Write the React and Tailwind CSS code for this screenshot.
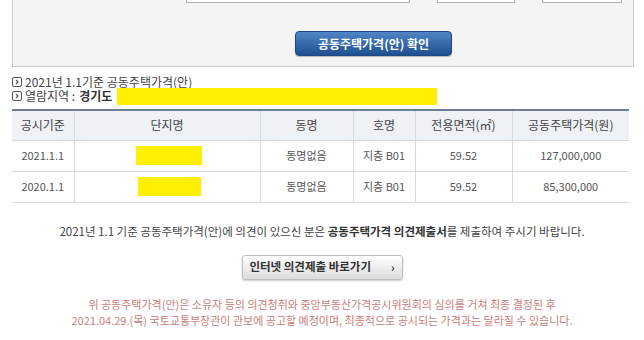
import React from "react";

const rows = [
  { date: "2021.1.1", hl: "ml-[61px] w-[66px]", dong: "동명없음", ho: "지층 B01", area: "59.52", price: "127,000,000" },
  { date: "2020.1.1", hl: "ml-[63px] w-[63px]", dong: "동명없음", ho: "지층 B01", area: "59.52", price: "85,300,000" },
];

function Bullet() {
  return (
    <span className="inline-flex shrink-0 items-center justify-center w-[10px] h-[10px] border border-[#555] rounded-[2px] mr-[3px]">
      <svg width="6" height="6" viewBox="0 0 6 6">
        <path d="M2 1 L4 3 L2 5" fill="none" stroke="#555" strokeWidth="1.2" />
      </svg>
    </span>
  );
}

export default function App() {
  return (
    <div className="w-[644px] h-[340px] bg-white overflow-hidden font-['Noto_Sans_CJK_KR','Noto_Sans',sans-serif] text-[#555]">
      {/* search box */}
      <div className="ml-[12px] w-[622px] h-[67px] bg-[#f4f4f4] border-x border-b border-[#c9c9c9] flex flex-col">
        <div className="flex h-[3px]">
          <div className="ml-[173px] w-[224px] border-x border-b border-[#b5b5b5] bg-white" />
          <div className="ml-[27px] w-[78px] border-x border-b border-[#b5b5b5] bg-white" />
          <div className="ml-[27px] w-[80px] border-x border-b border-[#b5b5b5] bg-white" />
        </div>
        <div className="flex mt-[28px]">
          <button className="ml-[282px] w-[157px] h-[25px] rounded-[4px] bg-gradient-to-b from-[#4f86c6] to-[#1f4f8f] border border-[#1d4a85] text-white text-[12px] font-bold leading-none shadow-[0_1px_1px_rgba(0,0,0,0.25)]">
            공동주택가격(안) 확인
          </button>
        </div>
      </div>

      {/* info lines */}
      <div className="ml-[12px] mt-[8px] text-[12px] leading-[14px] text-[#444]">
        <div className="flex items-center h-[14px]">
          <Bullet />
          <span>2021년 1.1기준 공동주택가격(안)</span>
        </div>
        <div className="flex items-center h-[14px]">
          <Bullet />
          <span>열람지역 :</span>
          <span className="font-bold text-[#333] ml-[4px]">경기도</span>
          <span className="ml-[5px] w-[320px] h-[17px] bg-[#ffef00]" />
        </div>
      </div>

      {/* table */}
      <table className="ml-[12px] mt-[6px] w-[617px] border-collapse table-fixed text-center">
        <colgroup>
          <col className="w-[62px]" />
          <col className="w-[186px]" />
          <col className="w-[93px]" />
          <col className="w-[62px]" />
          <col className="w-[97px]" />
          <col />
        </colgroup>
        <thead>
          <tr className="h-[30px] bg-[#eef1f6] border-t-2 border-[#6d7d95] text-[12px] text-[#444]">
            {["공시기준", "단지명", "동명", "호명", "전용면적(㎡)", "공동주택가격(원)"].map((h, i) => (
              <th key={h} className={`font-normal border-b border-[#d5d9e0] ${i > 0 ? "border-l" : ""} border-l-[#d5d9e0]`}>
                {h}
              </th>
            ))}
          </tr>
        </thead>
        <tbody className="text-[11px] text-[#555]">
          {rows.map((r) => (
            <tr key={r.date} className="h-[31px] border-b border-[#d5d9e0]">
              <td>{r.date}</td>
              <td className="border-l border-[#d5d9e0]">
                <div className={`${r.hl} h-[19px] bg-[#ffef00]`} />
              </td>
              <td className="border-l border-[#d5d9e0]">{r.dong}</td>
              <td className="border-l border-[#d5d9e0]">{r.ho}</td>
              <td className="border-l border-[#d5d9e0]">{r.area}</td>
              <td className="border-l border-[#d5d9e0]">{r.price}</td>
            </tr>
          ))}
        </tbody>
      </table>

      {/* notice */}
      <p className="mt-[20px] text-center text-[11.5px] text-[#444] leading-[16px]">
        2021년 1.1 기준 공동주택가격(안)에 의견이 있으신 분은{" "}
        <b className="text-[#333]">공동주택가격 의견제출서</b>를 제출하여 주시기 바랍니다.
      </p>

      <div className="flex justify-center mt-[16px]">
        <button className="w-[161px] h-[25px] rounded-[3px] border border-[#bdbdbd] bg-gradient-to-b from-[#ffffff] to-[#dcdcdc] text-[11.5px] font-semibold text-[#333] leading-none shadow-[0_1px_2px_rgba(0,0,0,0.2)] flex items-center justify-center gap-[20px]">
          <span>인터넷 의견제출 바로가기</span>
          <span className="text-[11px]">›</span>
        </button>
      </div>

      <div className="mt-[16px] text-center text-[11px] leading-[16px] text-[#c8807c]">
        <p>위 공동주택가격(안)은 소유자 등의 의견청취와 중앙부동산가격공시위원회의 심의를 거쳐 최종 결정된 후</p>
        <p>2021.04.29.(목) 국토교통부장관이 관보에 공고할 예정이며, 최종적으로 공시되는 가격과는 달라질 수 있습니다.</p>
      </div>
    </div>
  );
}
